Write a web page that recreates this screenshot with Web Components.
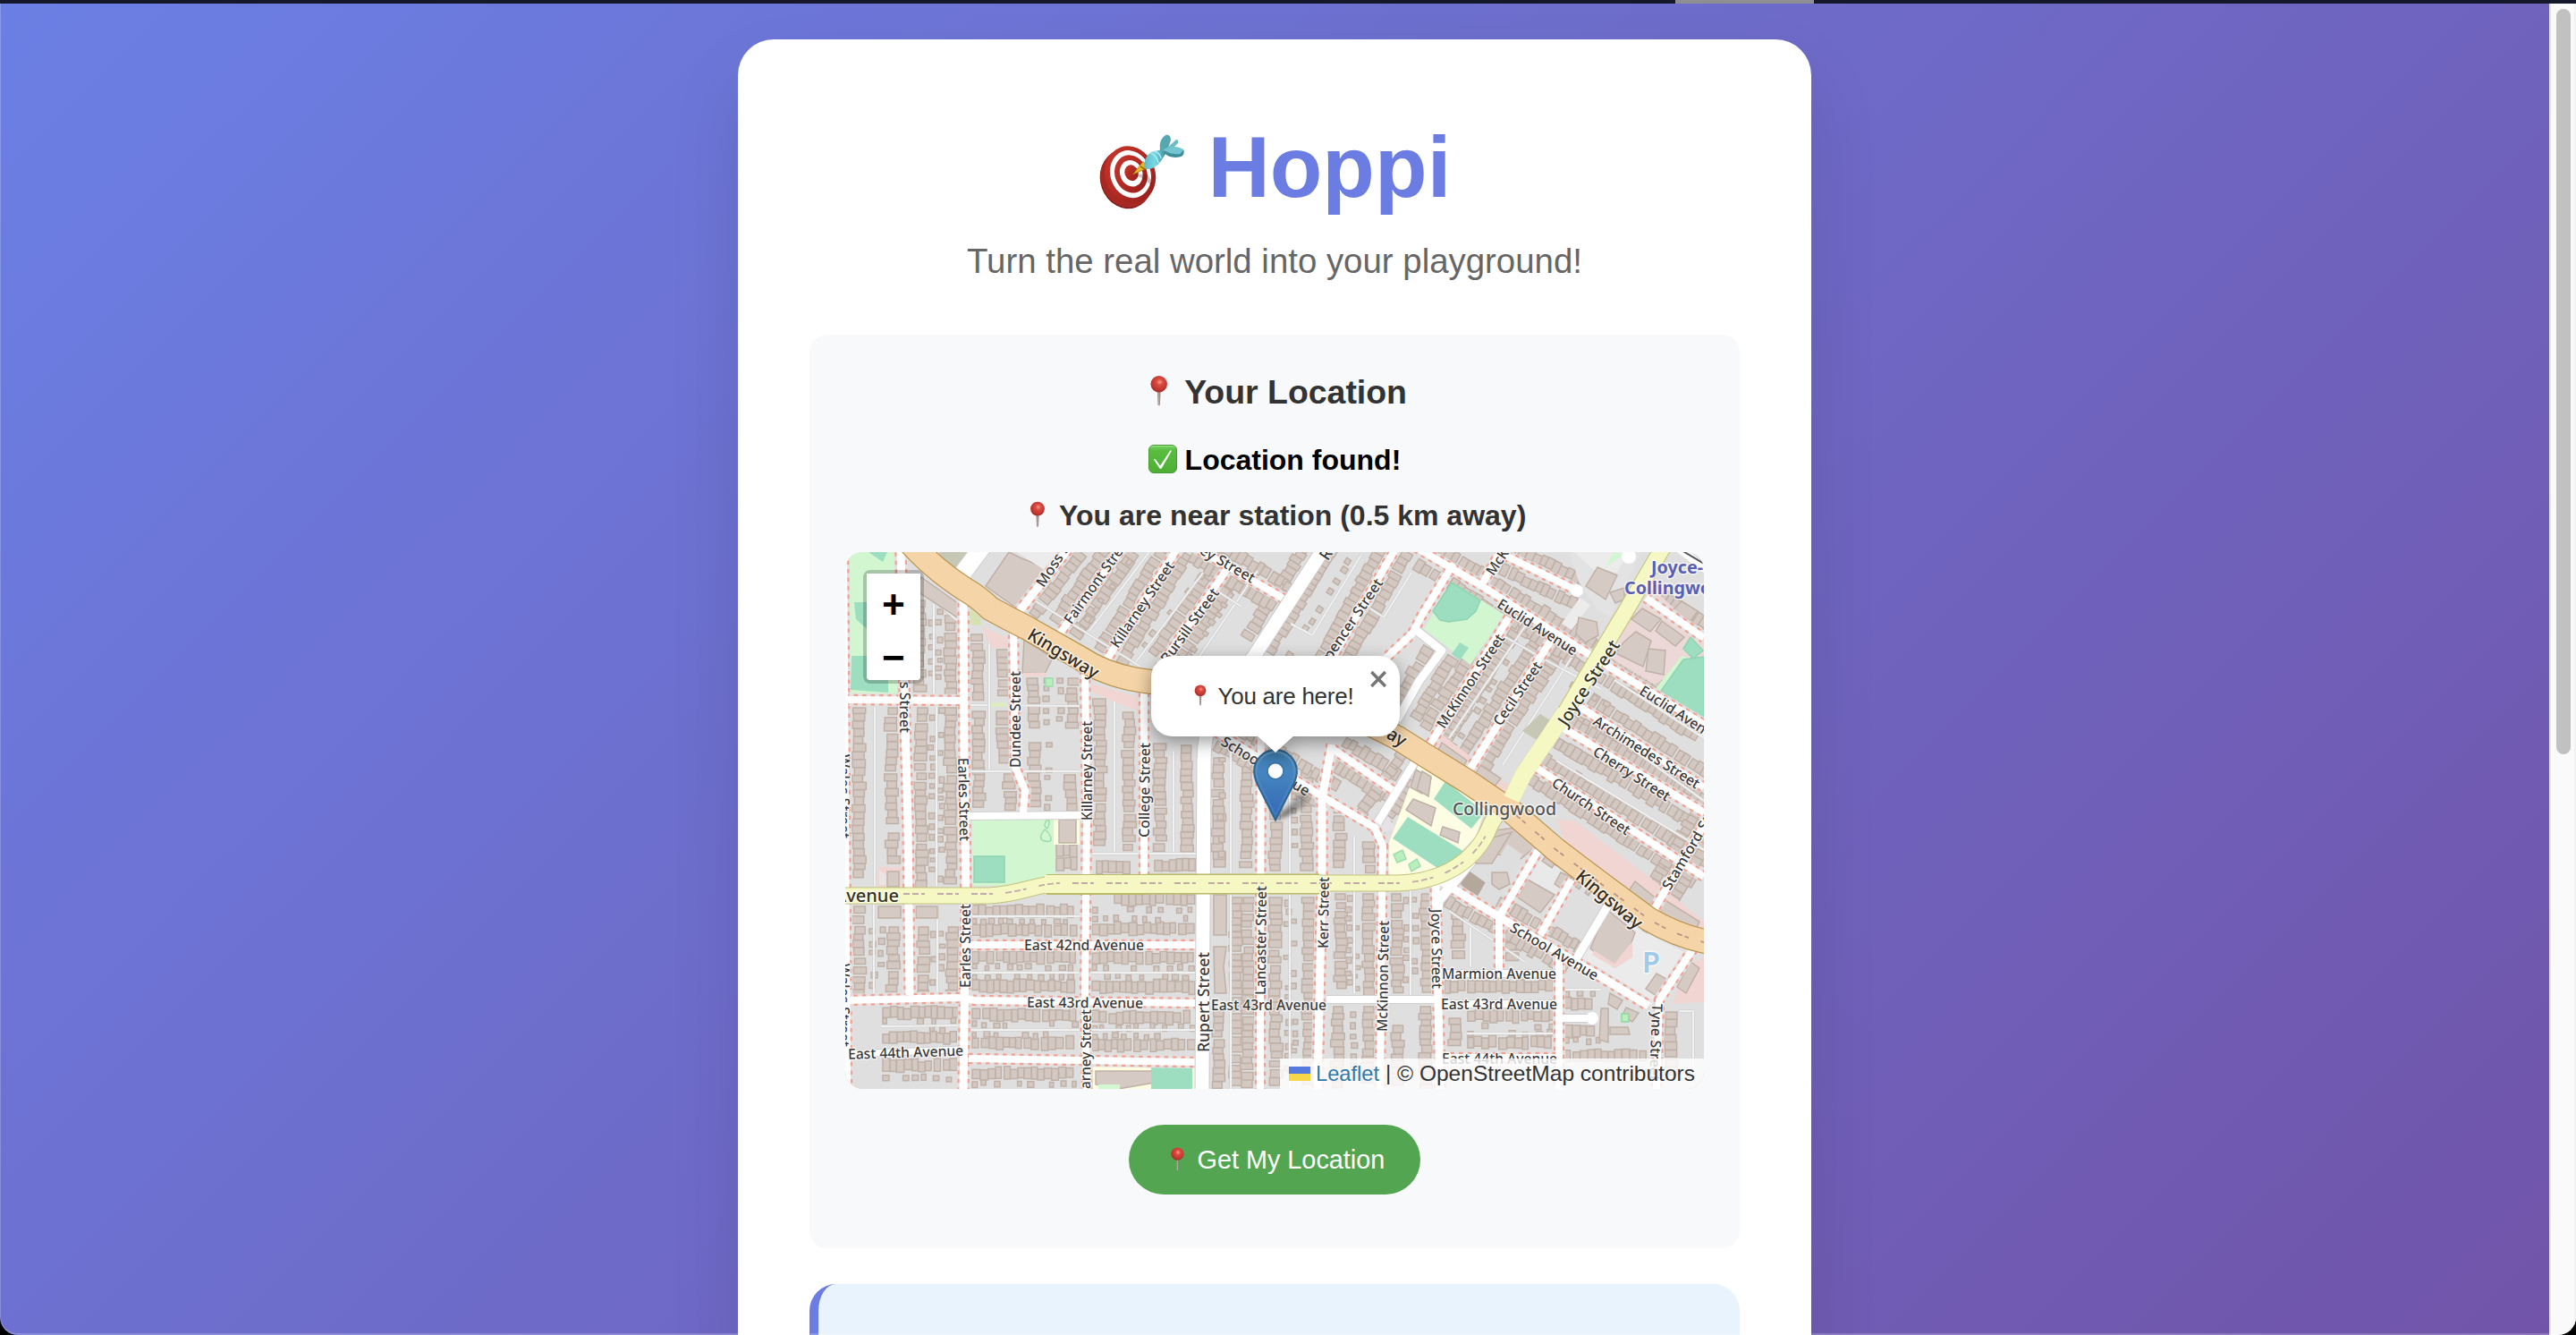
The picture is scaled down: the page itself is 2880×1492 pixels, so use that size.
<!DOCTYPE html>
<html lang="en">
<head>
<meta charset="utf-8">
<title>Hoppi</title>
<style>
html,body{margin:0;height:1492px;overflow:hidden;background:#000}
body{font-family:"Liberation Sans",Arial,sans-serif}
</style>
</head>
<body>
<hoppi-app></hoppi-app>
<script>
const define=(name,html,after)=>{
  const t=document.createElement('template');t.innerHTML=html;
  customElements.define(name,class extends HTMLElement{
    constructor(){super();this.attachShadow({mode:'open'}).append(t.content.cloneNode(true));}
    connectedCallback(){if(after)after(this,this.shadowRoot);}
  });
};

/* ---- emoji drawn as vector art, one em wide ---- */
const EMOJI={
pin:`<svg viewBox="0 0 32 32"><defs><radialGradient id="g" cx=".55" cy=".38" r=".65"><stop offset="0" stop-color="#f59a8c"/><stop offset=".3" stop-color="#dc4a40"/><stop offset="1" stop-color="#a92a25"/></radialGradient><linearGradient id="n"><stop offset="0" stop-color="#8b7c75"/><stop offset=".5" stop-color="#b9aca6"/><stop offset="1" stop-color="#7d706b"/></linearGradient></defs><path d="M14.500 17h3l-.5 12.600q-1 .9-2 0z" fill="url(#n)"/><circle cx="16" cy="9.600" r="7.900" fill="url(#g)"/></svg>`,
check:`<svg viewBox="0 0 32 32"><defs><linearGradient id="g" x2="0" y2="1"><stop offset="0" stop-color="#79d166"/><stop offset=".2" stop-color="#58bd3f"/><stop offset="1" stop-color="#4fae35"/></linearGradient></defs><rect x=".5" y=".5" width="31" height="31" rx="5.500" fill="url(#g)" stroke="#479a35"/><path d="M3 3.200q1-1.600 3-1.600h20q2 0 3 1.600" stroke="#9be58a" stroke-width="1" fill="none"/><path d="M5.800 16.200q1.700-.7 2.600.8l4.700 6.600L24.400 6.200l1.600.6L14.800 26.300q-1.300 1.400-2.500 0z" fill="#fff"/></svg>`,
target:`<svg viewBox="0 0 96 96"><defs><linearGradient id="r" x2=".6" y2="1"><stop offset="0" stop-color="#c9362b"/><stop offset="1" stop-color="#9e211d"/></linearGradient><linearGradient id="t" x2="1"><stop offset="0" stop-color="#5fb8c6"/><stop offset=".5" stop-color="#79d9e2"/><stop offset="1" stop-color="#3d8f9d"/></linearGradient></defs>
<g transform="rotate(-20 34 62)"><ellipse cx="30" cy="63.500" rx="28.500" ry="33" fill="#7c1c18"/><ellipse cx="31.500" cy="62.500" rx="29" ry="33" fill="#a82923"/><ellipse cx="36.500" cy="60" rx="28" ry="32.500" fill="url(#r)"/><ellipse cx="37" cy="59.500" rx="22.500" ry="27" fill="#fff"/><ellipse cx="37.500" cy="59.500" rx="18" ry="21.500" fill="url(#r)"/><ellipse cx="38" cy="59" rx="12.500" ry="15" fill="#fff"/><ellipse cx="38.500" cy="58.500" rx="7.500" ry="9" fill="url(#r)"/></g>
<path d="M41 60q12 3 20 14-1-10-7-16z" fill="#541815" opacity=".28"/>
<path d="M38.500 59 50 44.500l5.500 7z" fill="#e9b92c" stroke="#a37614" stroke-width=".7"/><path d="M47 50l5 3" stroke="#8d6a12" stroke-width="1.500"/>
<path d="M51 51Q51 39 59 34l12-3 4 5-5 8q-7 9-15 9z" fill="url(#t)"/><path d="M58 35q7 2 9 11M63 33q6 2 7 8" stroke="#a8edf2" stroke-width="1.500" fill="none"/>
<path d="M69 32Q67 19 76 14.500q5 0 5 6l-4 12z" fill="#57a7b0"/><path d="M75 31l12-11q3 0 2 4L80 33z" fill="#6fbcc4"/><path d="M72 32q12-5 23.500 0 1 5-3 7-12 3-19-4z" fill="#3f8e9b"/><path d="M72 32q10-8 23.500-1l-4 5q-9 1-16-3z" fill="#71c6d0"/></svg>`};
define('emoji-icon',`<style>:host{display:inline-block;width:1em;height:1em;vertical-align:-.125em}svg{display:block;width:100%;height:100%;overflow:visible}</style><span></span>`,
 (h,r)=>r.querySelector('span').innerHTML=EMOJI[h.getAttribute('name')]);

define('hoppi-header',`<style>:host{display:block;text-align:center}
h1{margin:0;font-size:96px;line-height:125px;height:125px;color:#6b7de2}
p{margin:21px 0 0;font-size:38.4px;line-height:44px;color:#666}</style>
<h1><slot name="title"></slot></h1><p><slot></slot></p>`);

define('hoppi-section',`<style>:host{display:flex;flex-direction:column;align-items:center;box-sizing:border-box;border-radius:20px;background:#f8f9fb;padding:40px 40px 60px}
:host([accent]){background:#e8f3fd;border-left:10px solid #6b7de2;border-radius:30px;height:300px;flex:none;padding:40px}</style><slot></slot>`);

define('status-line',`<style>:host{display:block;text-align:center;font-weight:bold;font-size:32px;line-height:38px;color:#333;white-space:nowrap}
:host([kind=title]){font-size:37.44px;line-height:48px}
:host([kind=found]){color:#000;margin-top:33px}
:host([kind=near]){margin:24px 0 22px}</style><slot></slot>`);

define('hoppi-button',`<style>:host{display:block;margin-top:40px}
button{display:block;width:326px;height:78px;border:0;border-radius:39px;background:#54a552;color:#fff;font:28.8px/78px "Liberation Sans",Arial,sans-serif;padding:0;text-align:center;white-space:nowrap}</style><button><slot></slot></button>`);

define('zoom-control',`<style>:host{display:flex;flex-direction:column;border:4px solid rgba(0,0,0,.2);border-radius:8px;background-clip:padding-box;width:60px}
span{height:59px;box-sizing:border-box;background:#fff;text-align:center;font:bold 44px/59px "Liberation Mono",monospace;color:#000;padding-top:9px;overflow:visible}
span:first-child{height:60px;border-radius:4px 4px 0 0;border-bottom:2px solid #ccc}span:last-child{height:60px;border-radius:0 0 4px 4px}</style><span>+</span><span>−</span>`);

define('map-popup',`<style>:host{display:block;width:278px;height:90px;filter:drop-shadow(0 6px 10px rgba(0,0,0,.4))}
.box{position:relative;display:flex;align-items:center;width:278px;height:90px;box-sizing:border-box;border-radius:24px;background:#fff;color:#333;font-size:26px;line-height:34px;letter-spacing:-.25px;padding-left:42px;white-space:nowrap}
.x{position:absolute;right:12px;top:6px;width:24px;height:40px;font-size:38px;line-height:40px;text-align:center;color:#757575;-webkit-text-stroke:.7px #757575}
.tip{position:absolute;left:117px;top:88px;width:44px;height:20px}</style>
<div class="box"><span><slot></slot></span><span class="x">×</span><svg class="tip" viewBox="0 0 44 20"><path d="M0 0H44L22 20Z" fill="#fff"/></svg></div>`);

define('map-marker',`<style>:host{display:block;width:90px;height:84px}svg{display:block;overflow:visible}</style>
<svg width="90" height="84" viewBox="0 0 45 42"><defs><linearGradient id="a" x2="0" y2="1"><stop offset="0" stop-color="#3f7cae"/><stop offset=".3" stop-color="#4585c0"/><stop offset="1" stop-color="#3468b5"/></linearGradient><linearGradient id="b" x2="0" y2="1"><stop offset="0" stop-color="#6097bd"/><stop offset="1" stop-color="#3f76c2"/></linearGradient><linearGradient id="s" gradientUnits="userSpaceOnUse" x1="13" y1="39" x2="31" y2="22"><stop offset="0" stop-opacity=".6"/><stop offset="1" stop-opacity=".12"/></linearGradient><filter id="f" x="-50%" y="-50%" width="200%" height="200%"><feGaussianBlur stdDeviation="1.300"/></filter></defs>
<path d="M12.500 39.500L28 23q6 0 3 6-7 8-18.500 10.500z" fill="url(#s)" filter="url(#f)"/>
<path d="M12.500.6C5.900.6.600 6 .600 12.600c0 3 .9 5 1.900 7.300L12.500 39.600l10-19.700c1-2.300 1.900-4.300 1.900-7.300C24.400 6 19.100.6 12.500.6z" fill="url(#a)" stroke="#2e6692" stroke-width="1.100"/>
<path d="M12.500 1.700C6.500 1.700 1.700 6.500 1.700 12.600c0 2.700.8 4.600 1.800 6.800l9 17.700 9-17.700c1-2.200 1.800-4.100 1.800-6.800 0-6.100-4.800-10.900-10.800-10.900z" fill="none" stroke="url(#b)" stroke-width="1.100"/>
<circle cx="12.500" cy="12.400" r="4.500" fill="#fff" stroke="#3c76a8" stroke-width=".8"/></svg>`);

define('map-attribution',`<style>:host{display:flex;align-items:center;box-sizing:border-box;height:34px;width:474px;padding:0 10px;background:rgba(255,255,255,.8)}
svg{width:24px;height:16px;margin:0 8px 0 0;flex:none}.t{width:424px;height:34px;margin:0}</style>
<svg viewBox="0 0 24 16"><path fill="#5579dc" d="M0 0h24v8H0z"/><path fill="#f7d648" d="M0 8h24v8H0z"/></svg><svg class="t" viewBox="0 0 424 34"><text x="-2" y="25" font-size="24" fill="#2f79a8" textLength="71" lengthAdjust="spacingAndGlyphs">Leaflet</text><text x="76" y="24" font-size="24" fill="#333">|</text><text x="89" y="25" font-size="24" fill="#333" textLength="333" lengthAdjust="spacingAndGlyphs">© OpenStreetMap contributors</text></svg>`);

/* ---- street map ---- */
define('city-map',`<style>:host{display:block;position:relative;width:960px;height:600px;border-radius:20px;overflow:hidden;background:#dfdfdf}
.canvas{position:absolute;inset:0}
zoom-control{position:absolute;left:20px;top:20px}
map-marker{position:absolute;left:456px;top:220px}
map-popup{position:absolute;left:342px;top:116px}
map-attribution{position:absolute;right:0;bottom:0}</style>
<div class="canvas"></div><zoom-control></zoom-control><map-marker></map-marker><map-popup><slot></slot></map-popup><map-attribution></map-attribution>`,
(host,root)=>{
 let seed=7;const rnd=()=>(seed=(seed*16807)%2147483647)/2147483647;
 const out=[];const f=n=>n.toFixed(1);
 const pts=a=>{let s='';for(let i=0;i<a.length;i+=2)s+=(i?'L':'M')+a[i]+' '+a[i+1];return s;};
 const poly=(a,c,s)=>out.push(`<path d="${pts(a)}Z" fill="${c}"${s?` stroke="${s}" stroke-width="1.500"`:''}/>`);
 const row=(x1,y1,x2,y2,d=11,small)=>{
  const L=Math.hypot(x2-x1,y2-y1),a=Math.atan2(y2-y1,x2-x1)*180/Math.PI;let p=1,s='';
  while(p<L-5){const w=small?4+rnd()*3:6.200+rnd()*2.600,h=small?5+rnd()*2:d-1+rnd()*4.500,o=(rnd()-.5)*3;
   if(!small||rnd()>.3)s+=`M${f(p)} ${f(o-h/2)}h${f(w)}v${f(h)}h${f(-w)}z`;p+=w+(small?3+rnd()*7:.3+(rnd()>.88?3:0));}
  out.push(`<path transform="translate(${x1} ${y1}) rotate(${f(a)})" d="${s}" fill="#d4c9c2" stroke="#bfb1a7" stroke-width="1.500"/>`);};
 const offset=(a,o)=>{const L=Math.hypot(a[2]-a[0],a[3]-a[1]),nx=-(a[3]-a[1])/L*o,ny=(a[2]-a[0])/L*o;return [a[0]+nx,a[1]+ny,a[2]+nx,a[3]+ny];};
 const alley=a=>out.push(`<path d="${pts(a)}" fill="none" stroke="#cdcdcd" stroke-width="3.200"/><path d="${pts(a)}" fill="none" stroke="#f1f1f1" stroke-width="2"/>`);

 /* vertical columns of houses */
 [[960,790,980],[960,1012,1112],[997,790,920],[998,930,968],[998,1035,1112],[1030,790,990],[1063,790,990],[1033,1035,1112],[1065,1035,1112],[1028,670,775],[1063,687,775],
  [1093,708,782],[1122,725,782],[1094,794,905],[1122,794,850],[1129,864,904],[1155,757,815],[1199,757,815],[1156,829,904],[1197,865,904],[1230,780,950],[1262,795,950],
  [1297,830,950],[1327,832,950],[1362,846,974],[1394,846,974],[1382,1002,1217],[1395,1002,1217],[1362,1128,1217],[1426,870,974],[1461,860,974],[1426,1002,1217],[1463,1002,1217],
  [1498,900,975],[1531,940,975],[1499,998,1110],[1530,998,1110],[1496,1124,1217],[1530,1124,1217],[1562,998,1110],[1595,998,1110],[1562,1145,1217],[1594,1124,1217],[1627,1137,1170],[1868,1130,1200],[1690,1035,1075],[1630,1020,1075]].forEach(c=>row(c[0],c[1],c[0],c[2]));
 [[976,1015,1112],[986,1035,1110],[1042,790,985],[1052,790,985],[1043,1040,1110],[1052,1040,1108],[1042,680,770],[1050,680,770],[1170,757,812],[1185,757,812],[1172,829,904],[1447,1005,1215],[1440,1005,1215],[1508,1000,1108],[1516,1000,1110],[1514,1130,1210],[1572,1002,1108],[1582,1002,1108],[1365,846,970],[1447,860,970]].forEach(c=>row(c[0],c[1],c[0],c[2],6,1));
 /* horizontal rows of houses */
 [[1086,1205,1018],[1086,1205,1039],[1086,1205,1069],[1086,1205,1102],[1086,1205,1134],[1086,1205,1166],[1086,1205,1200],[1245,1337,1005],[1220,1337,1038],[1220,1337,1070],[1220,1337,1103],[1220,1337,1137],[1220,1337,1168],[986,1072,1132],[986,1072,1160],[986,1072,1191],[1614,1738,1102],[1640,1738,1135],[1640,1738,1165],[1748,1785,1122],[1748,1790,1152],[1290,1335,967],[1225,1262,969],[1748,1840,1180],[1180,1205,950],[1180,1205,965],[1228,1232,1020]].forEach(r=>row(r[0],r[2],r[1],r[2]));
 [[1086,1205,1029],[1086,1205,1081],[1086,1205,1092],[1086,1205,1145],[1086,1205,1157],[1086,1205,1211],[1220,1337,1017],[1220,1337,1027],[1220,1337,1082],[1220,1337,1092],[1220,1337,1148],[1220,1337,1158],[986,1072,1141],[986,1072,1151],[986,1072,1205],[1640,1738,1147],[1640,1738,1155],[1748,1790,1110],[1748,1790,1163]].forEach(r=>row(r[0],r[2],r[1],r[2],6,1));

 /* rows flanking the diagonal streets */
 const diag=[[1143,680,1197,610],[1190,704,1256,610],[1240,735,1318,610],[1300,740,1376,630],[1405,722,1482,600],[1487,743,1562,610],[1604,822,1687,690],[1647,850,1733,717],
  [1770,792,1905,878],[1747,817,1905,910],[1717,858,1905,978],[1590,617,1905,812],[1683,623,1765,662],[1365,820,1490,890],[1495,840,1560,880],[1530,920,1583,847],[1840,670,1905,713],[1610,987,1760,1072],[1848,1017,1910,912],[1570,797,1612,727],[1337,610,1440,672]];
 diag.forEach(a=>{row(...offset(a,14),11);row(...offset(a,-14),11);});
 [[1207,705,1277,610],[1262,742,1345,640],[1327,735,1395,640],[1440,735,1518,612],[1624,838,1708,703],[1755,765,1805,790],[1720,960,1850,1045]].forEach(a=>row(...a,6,1));
 [[978,790,978,990],[977,1000,977,1112],[1047,790,1047,990],[1048,1012,1048,1112],[1044,675,1044,775],[1080,788,1208,789],[1106,717,1106,860],[1106,718,1135,718],[1246,780,1246,953],[1218,954,1275,954],[1312,840,1312,954],[1280,954,1338,954],[1376,840,1376,1217],[1442,850,1442,1217],[1514,935,1514,1110],[1577,990,1577,1115],[1085,1024,1207,1024],[1085,1087,1337,1087],[1085,1151,1337,1151],[985,1147,1075,1146],[1083,862,1213,862],[1640,1155,1740,1155],[1644,1035,1644,1080],
  [1043,670,1078,700],[1155,670,1275,745],[1218,705,1290,610],[1270,740,1345,640],[1338,738,1406,638],[1360,660,1388,678],[1443,697,1467,710],[1467,710,1522,620],[1532,680,1547,690],[1547,690,1578,640],[1620,825,1705,700],[1680,855,1757,735],[1683,712,1745,747],[1745,747,1790,770],[1805,760,1905,825],[1790,812,1905,895],[1740,850,1905,950],[1620,1018,1705,1075],[1878,1130,1893,1130],[1893,1130,1893,1217],[1748,1106,1790,1106],[1763,765,1720,838]].forEach(alley);

 /* land use */
 const G='#d2f6d0',P='#9dddc0',Y='#fdfde3',K='#f1d5d2',B='#d6cbc4',BS='#bfb1a7';
 poly([950,617,1003,617,1003,775,947,775],G);poly([971,617,987,628,992,617],P);poly([955,673,975,673,975,708,957,692],P);poly([952,733,993,733,993,774,951,771],P);
 poly([1050,617,1090,617,1073,641,1052,628],'#c6c7b4');
 poly([1102,655,1128,617,1140,623,1175,637,1140,682],B,BS);poly([1137,617,1185,617,1172,640],'#ececec');poly([1030,645,1072,675,1070,690,1024,660],B,BS);
 poly([1084,678,1096,690,1097,699,1084,698],'#d6e3b0');poly([1098,700,1130,715,1130,724,1108,724],K);poly([1145,715,1177,735,1168,753,1143,752],B,BS);poly([1215,762,1275,780,1273,795,1222,774],K);poly([1144,752,1170,752,1170,756,1144,756],K);
 poly([1169,758,1177,758,1177,767,1169,767],'#b9eebd','#9dddb0');poly([1108,785,1126,785,1126,790,1108,790],'#ddecc0');
 poly([1087,915,1180,915,1180,979,1125,990,1086,990],G);poly([1089,957,1123,957,1123,986,1089,986],P,'#8fd4b2');
 poly([1178,915,1207,915,1207,944,1178,944],Y);poly([1184,916,1203,916,1203,942,1184,942],B,BS);
 out.push('<path d="M1170 917q-4 5 0 9 3-1 3-9zM1168 927q-7 8-3 12 8 3 10 0 0-7-7-12" fill="none" stroke="#9bdcae" stroke-width="1.500"/>');
 poly([982,969,1010,969,1010,991,982,991],K);poly([983,972,991,978,991,989,983,989],'#e9e5e4');poly([992,974,1005,974,1005,991,992,991],B,BS);
 poly([982,1013,1007,1013,1007,1026,982,1026],B,BS);poly([1024,1013,1048,1013,1048,1026,1024,1026],B,BS);
 poly([1222,1192,1340,1192,1340,1217,1222,1217],Y);poly([1225,1197,1290,1197,1290,1210,1250,1217,1225,1212],B,BS);poly([1287,1193,1333,1193,1333,1217,1287,1217],P);poly([1228,1212,1252,1212,1252,1217,1228,1217],G);
 poly([1357,1000,1371,1000,1371,1045,1357,1045],B,BS);poly([1357,1058,1371,1058,1368,1080,1371,1110,1358,1110],B,BS);
 poly([1592,703,1623,650,1682,687,1644,743],G);poly([1623,651,1655,671,1650,683,1640,692,1620,695,1610,693,1602,683],P,'#8fd4b2');poly([1632,718,1642,724,1632,738,1623,731],P);
 poly([1555,817,1600,838,1575,850,1590,870],K);poly([1587,850,1600,845,1660,905,1650,935,1600,985,1555,985,1548,955],Y);
 poly([1574,913,1650,960,1610,972,1557,937],P);poly([1616,873,1603,893,1645,926,1660,908],P);poly([1583,860,1600,870,1590,887,1577,880],B,BS);poly([1580,893,1605,903,1600,923,1572,905],B,BS);poly([1590,862,1600,868,1597,890,1584,882],B,BS);poly([1613,924,1632,930,1630,942,1610,933],B,BS);poly([1552,913,1560,925,1545,932,1540,918],'#e6e3e8');
 poly([1558,955,1568,950,1572,960,1562,964],'#b9eebd','#9dddb0');poly([1575,966,1584,960,1588,968,1578,974],'#b9eebd','#9dddb0');
 poly([1755,617,1835,617,1800,690,1785,680,1765,650],'#e3e3e3');poly([1760,617,1820,617,1808,640,1782,637],'#ececec');poly([1786,634,1808,643,1795,670,1773,655],B,BS);poly([1800,662,1816,657,1816,670,1806,674],B,BS);poly([1766,668,1778,676,1757,704,1746,697],'#ececec');poly([1765,690,1785,695,1787,710,1772,718,1762,708],B,BS);
 poly([1795,634,1804,617,1815,620],G);
 poly([1824,690,1850,660,1905,710,1905,740,1865,755,1850,765,1800,735],'#ecd9d7');poly([1836,680,1857,692,1845,706,1824,692],B,BS);poly([1858,694,1883,712,1873,722,1851,705],B,BS);poly([1829,706,1846,716,1837,745,1806,730,1815,718],B,BS);poly([1843,725,1862,727,1860,754,1840,750],B,BS);poly([1880,672,1898,683,1890,694,1870,682],B,BS);
 poly([1850,771,1880,733,1905,740,1905,812],G);poly([1857,772,1882,737,1905,734,1905,805],P,'#8fd4b2');poly([1890,712,1904,727,1893,736,1882,725],P,'#8fd4b2');
 poly([1722,798,1738,808,1723,830,1702,817],'#c6c7b4');poly([1604,815,1690,880,1680,890,1600,832],K);
 [[1612,830,1640,850,1633,862,1606,842],[1655,855,1678,870,1668,882,1648,867]].forEach(a=>poly(a,B,BS));
 poly([1740,915,1762,918,1850,985,1905,1030,1905,1060,1840,1010,1760,965],K);
 poly([1635,968,1663,988,1650,1003,1633,988],'#b4a79c');poly([1655,930,1695,925,1718,945,1700,960,1650,950],B,BS);poly([1648,942,1690,930,1668,965,1650,965],B,BS);
 poly([1685,943,1702,955,1668,1020,1650,1005],'#dedede');poly([1668,975,1685,975,1688,988,1676,994,1668,988],B,BS);
 poly([1720,953,1755,980,1740,1000,1705,985],'#e9e9e9');poly([1708,983,1738,1000,1722,1020,1697,1003],B,BS);
 [[1733,950,1743,957,1735,970,1724,962],[1745,975,1757,980,1748,995,1738,988]].forEach(a=>poly(a,B,BS));
 poly([1825,1035,1895,1070,1845,1125,1765,1070,1790,1035],'#ebebeb');poly([1797,1017,1828,1042,1817,1073,1804,1080,1778,1060],B,BS);poly([1782,1062,1805,1077,1825,1052,1825,1070,1806,1082,1780,1067],K);
 poly([1852,1088,1863,1094,1852,1113,1840,1105],B,BS);poly([1890,1078,1905,1070,1905,1120,1870,1122,1880,1095],K);poly([1890,1075,1900,1082,1885,1110,1875,1103],B,BS);
 [[1860,1005,1900,1030,1893,1045,1855,1025],[1828,985,1850,1003,1840,1017,1818,1000]].forEach(a=>poly(a,B,BS));
 [[1790,1127,1798,1127,1798,1165,1788,1162],[1800,1148,1820,1148,1822,1156,1800,1156],[1800,1110,1814,1118,1808,1128,1798,1122],[1818,1126,1832,1132,1825,1142,1814,1135]].forEach(a=>poly(a,B,BS));
 poly([1813,1133,1821,1133,1821,1142,1813,1142],'#b9eebd','#8fd8a0');

 /* minor streets: [points, width, dashed footways] */
 const S=[
 [[943,617,945,900,947,1217],8,1],[[1007,617,1011,767,1015,920,1017,1112],9,1],[[1077,655,1078,843,1080,1010,1077,1217],9,1],[[1073,645,1103,605],19,0],
 [[1133,700,1135,857,1146,883,1144,908],8,1],[[1213,740,1215,910,1213,1110,1215,1217],8,1],[[1138,685,1197,610],9,1],[[1182,712,1256,610],8,1],[[1235,741,1318,610],8,1],
 [[1290,755,1376,630],8,1],[[1325,605,1440,672],8,1],[[1279,765,1279,980],8,1],[[1410,770,1409,1110,1409,1217],8,1],[[1489,832,1478,893,1478,980,1473,1217],9,1],
 [[1335,805,1363,820,1483,893,1537,925,1546,945,1545,1000,1543,1217],8,1],[[1562,610,1477,757],8,1],
 [[1625,630,1590,687,1579,708,1550,735,1535,765],8,1],[[1583,704,1612,727,1586,762,1562,805],9,0],[[1490,837,1557,883],8,1],[[1590,838,1540,920],9,0],
 [[1605,983,1610,1217],9,1],[[1676,1020,1676,1088],8,1],[[1743,1065,1743,1217],8,1],[[1743,1138,1779,1138],8,0],[[1893,1060,1855,1118,1852,1217],8,1],[[1797,1013,1762,1072],9,0],[[1757,983,1722,1045],8,1],[[1722,947,1677,1023],8,1],
 [[1608,983,1673,1023,1787,1090,1843,1124],9,1],[[1645,962,1608,1007,1607,1020],11,0],[[1846,1022,1915,905],8,1],
 [[1710,853,1905,980],8,1],[[1745,812,1905,908],8,1],[[1765,789,1905,880],8,1],[[1575,607,1657,655,1790,740,1905,810],8,1],[[1675,617,1763,660],8,1],[[1840,668,1905,713],8,1],
 [[1687,690,1597,835],8,1],[[1657,653,1683,607],8,1],[[1735,714,1640,865],8,1],
 [[1083,1056,1338,1056],8,1],[[945,1118,1073,1115,1090,1118,1338,1121],8,1],[[1483,1117,1608,1117],8,0],[[945,1178,1077,1173],7,0],[[1083,1183,1338,1187],8,1],
 [[945,782,1081,783],8,1],[[1083,912,1213,911],8,0],[[1612,1088,1743,1088],8,0],[[1612,1122,1743,1122],8,0],[[1612,1182,1743,1182],8,1]];
 const line=(a,w,c,x='')=>out.push(`<path d="${pts(a)}" fill="none" stroke="${c}" stroke-width="${w}" stroke-linejoin="round" ${x}/>`);
 S.forEach(s=>{line(s[0],s[1]+(s[2]?6:2),s[2]?'#e4e0df':'#cfcfcf');if(s[2])line(s[0],s[1]+4.500,'#efa294','stroke-dasharray="4.500 5"');});
 S.forEach(s=>line(s[0],s[1],'#fff'));
 const curve=(d,w,c,x='')=>out.push(`<path d="${d}" fill="none" stroke="${c}" stroke-width="${w}" ${x}/>`);
 const rup='M1484 607L1403 732C1365 785 1346 800 1346 850L1344 1217';curve(rup,17,'#cbcbcb');curve(rup,15,'#fff');
 out.push('<circle cx="1780" cy="1138" r="7" fill="#fff"/><circle cx="1763" cy="660" r="7" fill="#fff"/><circle cx="1821" cy="622" r="8" fill="#fff"/>');
 poly([1875,617,1890,617,1905,630,1905,640],'#fff');line([1880,615,1905,630],2,'#555');

 /* main roads */
 const av='M940 1001H1105C1140 1000 1160 987 1187 987L1280 987H1457L1563 987C1620 985 1650 957 1663 930C1670 910 1680 905 1690 893L1703 866L1750 796L1817 684L1862 607';
 const king='M1012 600C1030 622 1055 643 1078 658Q1095 668 1107 680Q1125 690 1147 701L1207 735Q1240 757 1287 762C1400 762 1480 780 1563 825L1590 842L1640 873L1690 907L1740 950L1797 993L1843 1027Q1875 1046 1910 1053';
 curve(av,19,'#c3c27c');curve('M1170 988.500H1275L1290 988H1455L1475 988',23,'#b9b966');
 curve(king,28,'#bb9550');
 curve(av,17,'#f6f8c3');curve('M1168 988H1455L1475 988',20,'#f6f8c3');curve(king,25.500,'#f5d5a8');
 curve('M1690 893L1703 866L1750 796',19,'#f6f8c3');
 curve('M1010 999H1105C1140 999 1160 987 1187 987L1280 987H1457L1563 987C1620 985 1650 957 1663 930',1.800,'#bfa9a9','stroke-dasharray="7 3 7 3 4 14"');
 curve('M1695 911L1740 950L1797 993L1843 1027Q1875 1046 1905 1053',1.800,'#b5938a','stroke-dasharray="6 3 5 14"');

 /* labels run from one point to another */
 const T=(t,x1,y1,x2,y2,s=16,c='#3a3a3a',w='font-weight="500"')=>{const L=Math.hypot(x2-x1,y2-y1),a=Math.atan2(y2-y1,x2-x1)*180/Math.PI;
  out.push(`<text transform="translate(${x1} ${y1}) rotate(${f(a)})" y="${f(s*.36)}" font-size="${s}" textLength="${f(L)}" lengthAdjust="spacingAndGlyphs" fill="${c}" ${w}>${t}</text>`);};
 T('Moss Street',1162,654,1213,577);T('Fairmont Street',1193,695,1260,601);T('Killarney Street',1245,722,1309,629);T('ey Street',1343,613,1402,647);T('Bursill Street',1301,739,1359,659);
 T('Rupert Street',1479,624,1540,532,18);T('Spencer Street',1478,743,1542,648);T('McKinnon Street',1665,641,1733,540);T('Euclid Avenue',1676,673,1762,728);T('McKinnon Street',1610,812,1678,710);
 T('Cecil Street',1673,809,1720,741);T('Joyce Street',1746,809,1806,717,19,'#33331f');T('Euclid Avenue',1835,770,1922,826);T('Archimedes Street',1783,804,1899,877);T('Cherry Street',1783,838,1866,891);
 T('Church Street',1737,873,1821,929);T('Stamford Street',1862,993,1926,886);T('Kingsway',1151,707,1227,753,20,'#332a1c');T('Kingsway',1765,976,1834,1034,20,'#332a1c');T('Kingsway',1496,783,1571,829,20,'#332a1c');
 T('s Street',1012,762,1012,819);T('Dundee Street',1135,858,1135,750);T('Killarney Street',1215,917,1215,806);T('Earles Street',1077,847,1079,940);T('Wales Street',944,843,944,937);T('Wales Street',944,1077,944,1170);
 T('Earles Street',1079,1104,1079,1010);T('Avenue',933,1001,1005,1001,19,'#33331f');T('East 42nd Avenue',1145,1056,1279,1056);T('East 43rd Avenue',1148,1120,1278,1121);T('East 44th Avenue',948,1178,1077,1174);
 T('Killarney Street',1213,1239,1214,1128);T('College Street',1279,936,1280,830);T('Rupert Street',1345,1176,1345,1064,18);T('Lancaster Street',1409,1112,1410,990);T('Kerr Street',1479,1060,1480,980);T('McKinnon Street',1545,1153,1547,1029);
 T('Joyce Street',1606,1016,1607,1105);T('East 43rd Avenue',1354,1123,1483,1123);T('School Avenue',1367,827,1463,885);T('School Avenue',1690,1035,1786,1091);T('Marmion Avenue',1612,1088,1740,1088);T('East 43rd Avenue',1611,1122,1741,1122);T('East 44th Avenue',1612,1183,1741,1183);T('Tyne Street',1853,1122,1850,1208);
 T('Collingwood',1624,904,1740,904,20,'#555');T('Joyce-',1846,634,1904,634,19,'#5a5fb4','font-weight="700"');T('Collingwood',1816,657,1938,657,19,'#5a5fb4','font-weight="700"');T('P',1836,1075,1856,1075,33,'#9dcbe9','font-weight="600"');
 root.querySelector('.canvas').innerHTML=`<svg width="960" height="600" viewBox="945 617 960 600"><style>text{font-family:"Noto Sans","Open Sans",sans-serif;paint-order:stroke;stroke:#fff;stroke-opacity:.65;stroke-width:3px;stroke-linejoin:round}</style><rect x="945" y="617" width="960" height="600" fill="#dfdfdf"/>${out.join('')}</svg>`;
});

define('scroll-rail',`<style>:host{display:block;box-sizing:border-box;width:30px;border-left:2px solid #e6e6e8;border-right:2px solid #f0f0f0;background:#fafafa;padding:6px 4px 0 6px}
i{display:block;width:16px;height:833px;border-radius:8px;background:#c1c1c1}</style><i></i>`);

define('hoppi-app',`<style>:host{display:flex;flex-direction:column;width:2880px;height:1492px;background:#000}
.bar{height:4px;flex:none;background:linear-gradient(90deg,#15182b 1873px,#8e8e93 1873px,#8e8e93 2028px,#15182b 2028px)}
.window{flex:1;min-height:0;display:flex;overflow:hidden;border-radius:0 0 20px 20px;position:relative}
.window::after{content:"";position:absolute;left:0;right:0;bottom:0;top:0;border:solid rgba(255,255,255,.2);border-width:0 2px 2px 1px;border-radius:0 0 20px 20px}
.page{flex:1;background:linear-gradient(135deg,#6b7fe4,#724da0) 0 0/2850px 2200px no-repeat;display:flex;flex-direction:column;align-items:center;padding-top:40px}
main{width:1200px;height:2100px;flex:none;box-sizing:border-box;background:#fff;border-radius:40px;padding:80px;box-shadow:0 40px 80px rgba(0,0,0,.1);display:flex;flex-direction:column}
hoppi-section{margin-top:60px}hoppi-section[accent]{margin-top:40px}</style>
<div class="bar"></div><div class="window"><div class="page"><main>
<hoppi-header><span slot="title"><emoji-icon name="target"></emoji-icon> Hoppi</span>Turn the real world into your playground!</hoppi-header>
<hoppi-section>
<status-line kind="title"><emoji-icon name="pin"></emoji-icon> Your Location</status-line>
<status-line kind="found"><emoji-icon name="check"></emoji-icon> Location found!</status-line>
<status-line kind="near"><emoji-icon name="pin"></emoji-icon> You are near station (0.5 km away)</status-line>
<city-map><emoji-icon name="pin"></emoji-icon> You are here!</city-map>
<hoppi-button><emoji-icon name="pin"></emoji-icon> Get My Location</hoppi-button>
</hoppi-section>
<hoppi-section accent></hoppi-section>
</main></div><scroll-rail></scroll-rail></div>`);
</script>
</body>
</html>
